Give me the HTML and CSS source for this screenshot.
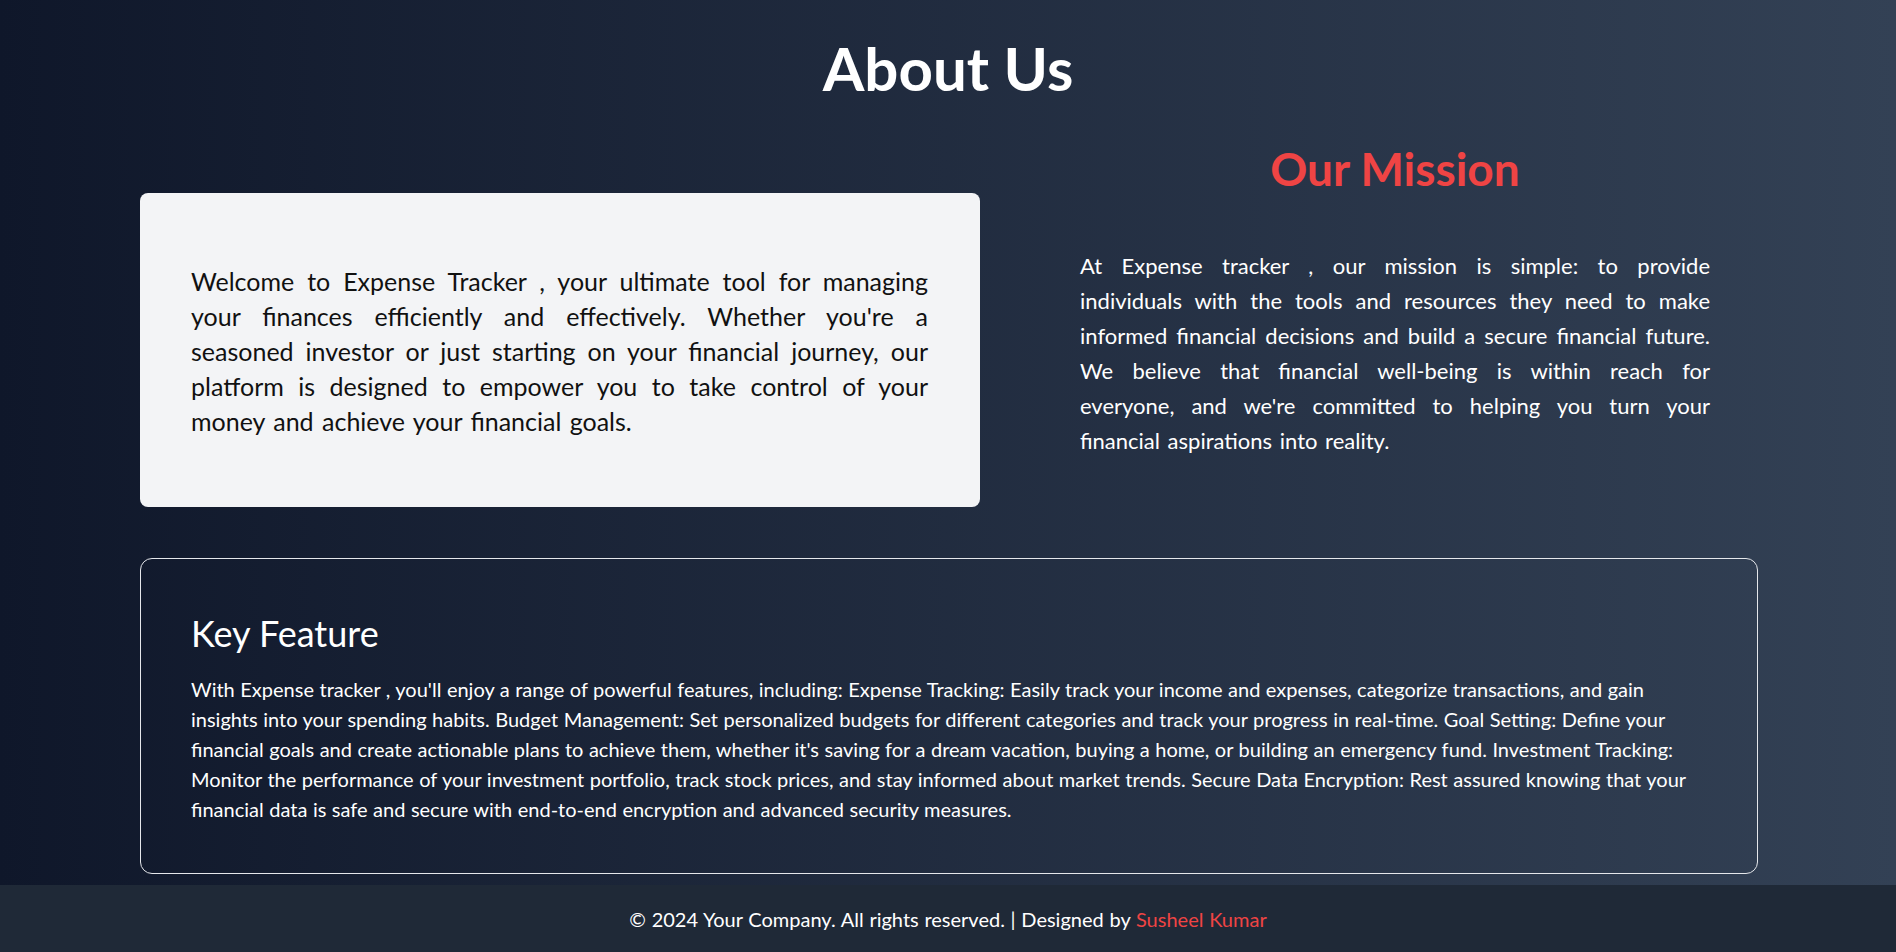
FILE: index.html
```html
<!DOCTYPE html>
<html lang="en">
<head>
<meta charset="utf-8">
<title>About Us</title>
<link rel="stylesheet" href="styles.css">
</head>
<body>
<div class="page">
  <main class="main">
    <h1 class="title">About Us</h1>
    <section class="intro">
      <div class="welcome-card">
        <p class="welcome-text"><span class="jl">Welcome to Expense Tracker , your ultimate tool for managing</span> <span class="jl">your finances efficiently and effectively. Whether you're a</span> <span class="jl">seasoned investor or just starting on your financial journey, our</span> <span class="jl">platform is designed to empower you to take control of your</span> <span class="ll">money and achieve your financial goals.</span></p>
      </div>
      <div class="mission">
        <h2 class="mission-title">Our Mission</h2>
        <p class="mission-text"><span class="jl">At Expense tracker , our mission is simple: to provide</span> <span class="jl">individuals with the tools and resources they need to make</span> <span class="jl">informed financial decisions and build a secure financial future.</span> <span class="jl">We believe that financial well-being is within reach for</span> <span class="jl">everyone, and we're committed to helping you turn your</span> <span class="ll">financial aspirations into reality.</span></p>
      </div>
    </section>
    <section class="features">
      <h2 class="features-title">Key Feature</h2>
      <p class="features-text">With Expense tracker , you'll enjoy a range of powerful features, including: Expense Tracking: Easily track your income and expenses, categorize transactions, and gain<br>insights into your spending habits. Budget Management: Set personalized budgets for different categories and track your progress in real-time. Goal Setting: Define your<br>financial goals and create actionable plans to achieve them, whether it's saving for a dream vacation, buying a home, or building an emergency fund. Investment Tracking:<br>Monitor the performance of your investment portfolio, track stock prices, and stay informed about market trends. Secure Data Encryption: Rest assured knowing that your<br>financial data is safe and secure with end-to-end encryption and advanced security measures.</p>
    </section>
  </main>
  <footer class="footer">
    <p class="footer-text">© 2024 Your Company. All rights reserved. | Designed by <span class="accent">Susheel Kumar</span></p>
  </footer>
</div>
</body>
</html>
```
FILE: styles.css
```css
* { box-sizing: border-box; }
html, body { margin: 0; padding: 0; }
body {
  font-family: "Lato", "Noto Sans", sans-serif;
  color: #ffffff;
  background: #0f172a;
}
.page {
  min-height: 952px;
  display: flex;
  flex-direction: column;
  background: linear-gradient(to right, #0f172a, #334155);
}
.main {
  flex: 1;
  width: 1618px;
  margin-left: 140px;
  padding-top: 38px;
  padding-bottom: 11px;
}
.title {
  margin: 0 -138px 0 -140px;
  font-size: 60px;
  line-height: 60px;
  font-weight: 700;
  text-align: center;
}
.intro {
  display: grid;
  grid-template-columns: 840px 1fr;
  column-gap: 52px;
  margin-top: 47px;
  align-items: start;
}
.welcome-card {
  margin-top: 48px;
  height: 314px;
  background: #f3f4f6;
  border-radius: 8px;
  padding: 71px 52px 0 51px;
}
.welcome-text {
  margin: 0;
  color: #111111;
  font-size: 25px;
  line-height: 35px;
  word-spacing: 2px;
}
.jl {
  display: block;
  text-align: justify;
  text-align-last: justify;
}
.ll {
  display: block;
  text-align: left;
}
.mission {
  padding: 0 48px;
}
.mission-title {
  margin: 0;
  font-size: 46px;
  line-height: 48px;
  font-weight: 700;
  color: #ef4444;
  text-align: center;
}
.mission-text {
  margin: 55px 0 0;
  font-size: 22px;
  line-height: 35px;
  word-spacing: 2px;
  color: #ffffff;
}
.features {
  margin-top: 51px;
  border: 1px solid #e5e7eb;
  border-radius: 12px;
  padding: 54px 50px 49px 50px;
}
.features-title {
  margin: 0;
  font-size: 36px;
  line-height: 40px;
  font-weight: 400;
}
.features-text {
  margin: 21px 0 0;
  font-size: 20px;
  line-height: 30px;
  word-spacing: 0.4px;
}
.footer {
  background: #1f2937;
  height: 67px;
  display: flex;
  align-items: center;
  justify-content: center;
}
.footer-text {
  margin: 0;
  font-size: 20px;
  line-height: 28px;
  word-spacing: 0.6px;
  color: #ffffff;
}
.accent { color: #ef4444; }
```
